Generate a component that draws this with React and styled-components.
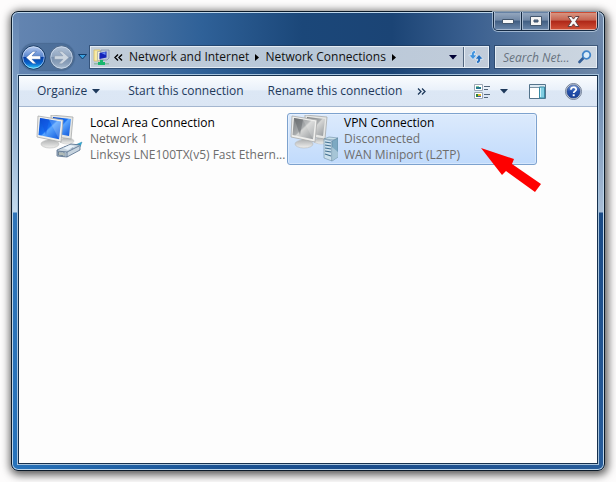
import React from "react";
import styled, { createGlobalStyle, css } from "styled-components";

const GlobalStyle = createGlobalStyle`
  * { box-sizing: border-box; }
  body {
    margin: 0;
    background: #fdfcfc;
    font-family: "Open Sans", "Noto Sans", sans-serif;
    font-size: 12px;
    line-height: 16px;
    color: #000;
  }
  button, input { font: inherit; color: inherit; margin: 0; }
  svg { display: block; flex: none; }
`;

const Desktop = styled.div`
  display: flex;
  min-height: 100vh;
  padding: 11px;
`;

const Window = styled.main`
  position: relative;
  flex: 1;
  min-width: 0;
  display: flex;
  flex-direction: column;
  padding: 0 6px 6px;
  border: 1px solid #0b1a29;
  border-radius: 7px;
  background:
    linear-gradient(#6485b1 0, #7f9fc4 80px, #c3daee 200px, #2f74b8 201px, #2672ba 100%) left / 7px 100% no-repeat,
    linear-gradient(#7389a8 0, #6483ab 60px, #a9bed6 200px, #1b4b86 201px, #285d9b 100%) right / 7px 100% no-repeat,
    linear-gradient(90deg, #6485b1 0, #5479a7 90px, #2f6198 190px, #1b4779 290px, #1b4475 380px, #3b6090 460px, #7089a8 100%) top / 100% 68px no-repeat,
    linear-gradient(90deg, #2672ba, #1b5292 35%, #1a4c8a 60%, #285d9b);
  box-shadow: inset 0 0 0 1px #bcd5ea, 1px 2px 8px 2px rgba(0, 0, 0, 0.65);
`;

const CaptionButtons = styled.div`
  display: flex;
  align-self: flex-end;
  height: 19px;
  border: 1px solid #142942;
  border-top: 0;
  border-radius: 0 0 5px 5px;
  overflow: hidden;
  box-shadow: 0 0 0 1px rgba(205, 221, 238, 0.65);
`;

const CaptionButton = styled.button`
  display: grid;
  place-items: center;
  width: ${(p) => (p.$close ? 47 : 27)}px;
  padding: 0;
  border: 1px solid ${(p) => (p.$close ? "#e5a89c" : "#a6b8cf")};
  border-top-color: transparent;
  background: ${(p) =>
    p.$close
      ? "linear-gradient(#d89582 0, #c66350 45%, #ae2617 50%, #cf4e35 100%)"
      : "linear-gradient(#93a6be 0, #7188a6 45%, #405d82 50%, #6884a7 100%)"};
  & + & { box-shadow: -1px 0 #142942; margin-left: 1px; }
`;

const NavBar = styled.nav`
  display: flex;
  align-items: center;
  height: 26px;
  margin-top: 13px;
  padding: 0 1px 0 3px;
`;

const TravelButtons = styled.div`
  display: flex;
  gap: 3px;
  height: 26px;
  align-items: center;
  border-radius: 13px;
  background: rgba(40, 72, 112, 0.3);
  box-shadow: 0 0 1px 1px rgba(34, 62, 98, 0.35);
`;

const IconButton = styled.button`
  display: grid;
  place-items: center;
  flex: none;
  width: ${(p) => p.$width || 25}px;
  height: ${(p) => p.$height || 25}px;
  padding: 0;
  border: 0;
  background: none;
`;

const fieldStyle = css`
  display: flex;
  align-items: center;
  height: 22px;
  border: 1px solid #e4ecf4;
  background: linear-gradient(#c3cedb, #b9c8d8);
  box-shadow: 0 0 0 1px rgba(28, 53, 86, 0.55);
`;

const AddressBar = styled.div`
  ${fieldStyle}
  flex: 1;
  min-width: 0;
  padding-left: 2px;
  background: linear-gradient(90deg, #c3ced9, #b7c7d8 50%, #c1ccda);
`;

const Crumb = styled.button`
  padding: 0;
  border: 0;
  background: none;
  white-space: nowrap;
  color: #111;
  margin-left: ${(p) => p.$gap || 6}px;
`;

const CrumbArrow = styled.svg`
  margin-left: 6px;
`;

const Spacer = styled.div`
  flex: 1;
`;

const RefreshButton = styled(IconButton)`
  height: 20px;
  border-left: 1px solid #52667f;
  box-shadow: inset 1px 0 #e4ecf4;
`;

const SearchBox = styled.label`
  ${fieldStyle}
  width: 102px;
  margin-left: 6px;
  padding: 0 4px 0 7px;
  background: linear-gradient(90deg, #c2ceda, #ccd6e1);
`;

const SearchInput = styled.input`
  flex: 1;
  min-width: 0;
  height: 20px;
  padding: 0;
  border: 0;
  outline: 0;
  background: none;
  &::placeholder { color: #68737f; opacity: 1; font-style: italic; }
`;

const Client = styled.section`
  flex: 1;
  display: flex;
  flex-direction: column;
  margin-top: 5px;
  border: 1px solid #16304d;
  background: #fdfdfd;
  box-shadow: 0 0 0 1px #a6c3dd;
`;

const Toolbar = styled.div`
  display: flex;
  align-items: center;
  height: 31px;
  padding: 0 15px 0 18px;
  border-bottom: 1px solid #a4b6cf;
  background: linear-gradient(#fafcfe 0, #eaf1fa 45%, #dce7f5 50%, #dbe6f4 100%);
  color: #1e395b;
`;

const ToolButton = styled.button`
  display: flex;
  align-items: center;
  gap: 5px;
  padding: 0;
  border: 0;
  background: none;
  white-space: nowrap;
  margin-right: ${(p) => p.$after || 0}px;
`;

const Connections = styled.div`
  display: flex;
  flex-wrap: wrap;
  align-items: flex-start;
  gap: 4px;
  padding: 6px 14px;
`;

const ConnectionTile = styled.article`
  position: relative;
  display: flex;
  width: 250px;
  height: 52px;
  padding: 1px 0 1px 2px;
  border: 1px solid ${(p) => (p.$selected ? "#7da2ce" : "transparent")};
  border-radius: 3px;
  background: ${(p) => (p.$selected ? "linear-gradient(#dceafc, #c1dbfc)" : "none")};
  box-shadow: ${(p) => (p.$selected ? "inset 0 0 0 1px rgba(255,255,255,.35)" : "none")};
`;

const TileText = styled.div`
  margin-left: 6px;
`;

const TileLine = styled.div`
  white-space: nowrap;
  color: ${(p) => (p.$title ? "#000" : "#6d6d6d")};
`;

const Pointer = styled.svg`
  position: absolute;
  left: 192px;
  top: 33px;
`;

const Caret = ({ color = "#1e395b" }) => (
  <svg width="8" height="5" viewBox="0 0 8 5"><path d="M0 0h8L4 4.6z" fill={color} /></svg>
);

const TravelIcon = ({ active, flip }) => {
  const id = active ? "back" : "forward";
  return (
    <svg width="25" height="25" viewBox="0 0 25 25">
      <defs>
        <linearGradient id={id} x2="0" y2="1">
          <stop stopColor={active ? "#b8ccef" : "#b3c3d7"} />
          <stop offset=".46" stopColor={active ? "#5b87d0" : "#91a6c1"} />
          <stop offset=".5" stopColor={active ? "#073fa4" : "#7890ae"} />
          <stop offset=".75" stopColor={active ? "#0965ce" : "#8ba0ba"} />
          <stop offset="1" stopColor={active ? "#35d8fb" : "#b1c2d4"} />
        </linearGradient>
      </defs>
      <circle cx="12.5" cy="12.5" r="11.7" fill={`url(#${id})`} stroke={active ? "#153760" : "#4e6786"} />
      <circle cx="12.5" cy="12.5" r="10.7" fill="none" stroke="#dfedff" strokeOpacity=".6" />
      <path
        transform={flip ? "translate(25 0) scale(-1 1)" : undefined}
        d="M5 12.5l7-6.2h3.300l-4.200 4.500h8.400v3.500h-8.400l4.200 4.500H12z"
        fill={active ? "#fff" : "#cdd6e0"}
        stroke={active ? "#2755a0" : "#8495ac"}
        strokeWidth=".5"
      />
    </svg>
  );
};

const NetworkFolderIcon = () => (
  <svg width="17" height="17" viewBox="0 0 17 17">
    <path d="M1 1h6v11H1z" fill="#f8eba6" stroke="#d5bd63" strokeWidth=".8" />
    <path d="M4.500 2.500h6v9h-6z" fill="#f0eedd" stroke="#a4a79f" strokeWidth=".7" />
    <path d="M8 1h8v8l-2 2H7V8z" fill="#bbc6d7" stroke="#7888a4" strokeWidth=".7" />
    <path d="M6.500 4l7-1.500v6l-7 1.500z" fill="#1322b9" />
    <path d="M8.500 4l4-1v3z" fill="#6589f6" />
    <path d="M1 14h15v1.500H1z" fill="#8fbba6" />
    <path d="M7 11h3v2h2v3H5v-3h2z" fill="#18b76f" />
  </svg>
);

const RefreshIcon = () => (
  <svg width="16" height="16" viewBox="0 0 16 16">
    <path d="M7.500 1.500C4.500 1.500 3.300 3.200 3.300 6H.7L5 10.500 9 6H6.300c0-1.600.2-2 1.200-2.300z" fill="#4094df" stroke="#f0f6fb" strokeWidth=".7" />
    <path d="M8.500 14.500c3 0 4.200-1.700 4.200-4.500h2.600L11 5.500 7 10h2.700c0 1.600-.2 2-1.200 2.300z" fill="#246fc0" stroke="#f0f6fb" strokeWidth=".7" />
  </svg>
);

const SearchIcon = () => (
  <svg width="14" height="14" viewBox="0 0 14 14">
    <path d="M5.800 7.500L1.500 12" stroke="#345f98" strokeWidth="2.600" strokeLinecap="round" />
    <circle cx="8.500" cy="5" r="3.800" fill="#dcecf8" stroke="#4285c9" strokeWidth="1.800" />
  </svg>
);

const ViewsIcon = () => (
  <svg width="17" height="17" viewBox="0 0 17 17">
    <path d="M.5 1.500h8v6h-8zM.5 9.500h8v6h-8z" fill="#fff" stroke="#9ba7b5" />
    <path d="M2 4h5v2H2z" fill="#257990" />
    <path d="M2 3h3v1H2z" fill="#84c99a" />
    <path d="M2 11h2v3H2z" fill="#29833a" />
    <path d="M4 11h3v2H4z" fill="#e1b72a" />
    <path d="M4 13h3v1H4z" fill="#4455c0" />
    <path d="M10 3.500h6M10 6.500h4M10 11.500h6M10 14.500h4" stroke="#52657b" />
  </svg>
);

const PaneIcon = () => (
  <svg width="17" height="15" viewBox="0 0 17 15">
    <path d="M.5.5h16v14H.5z" fill="#fff" stroke="#53738b" />
    <path d="M1 1h15v2H1z" fill="#dce9f2" />
    <path d="M1 3.500h9" stroke="#7a91a2" />
    <path d="M10.500 3h5v11h-5z" fill="#7fcde2" stroke="#388aa4" />
    <path d="M11.500 4v9" stroke="#ccf2fa" />
  </svg>
);

const HelpIcon = () => (
  <svg width="17" height="17" viewBox="0 0 17 17">
    <defs>
      <linearGradient id="help" x2="0" y2="1">
        <stop stopColor="#7b9edb" /><stop offset=".5" stopColor="#2350ab" /><stop offset="1" stopColor="#184099" />
      </linearGradient>
    </defs>
    <circle cx="8.500" cy="8.500" r="8" fill="#d1d8e3" stroke="#707f96" />
    <circle cx="8.500" cy="8.500" r="6.600" fill="url(#help)" stroke="#243f7c" strokeWidth=".6" />
    <path d="M5.900 6.700c0-3.300 5.300-3.200 5.300-.3 0 1.900-2.500 1.800-2.500 3.600" fill="none" stroke="#fff" strokeWidth="1.700" />
    <path d="M7.700 11.300h2v1.900h-2z" fill="#fff" />
  </svg>
);

const MonitorsIcon = ({ vpn }) => {
  const id = vpn ? "screen-gray" : "screen-blue";
  return (
    <svg width="48" height="48" viewBox="0 0 48 48">
      <defs>
        <linearGradient id={id} x1="0" y1="0" x2="1" y2="1">
          <stop stopColor={vpn ? "#777a7c" : "#0646c9"} />
          <stop offset=".45" stopColor={vpn ? "#a9acae" : "#1770f3"} />
          <stop offset=".5" stopColor={vpn ? "#d5d6d5" : "#5aa6ff"} />
          <stop offset="1" stopColor={vpn ? "#929699" : "#0b52d8"} />
        </linearGradient>
        <linearGradient id={id + "-base"} x2="0" y2="1">
          <stop stopColor="#b2b4b5" /><stop offset="1" stopColor="#f0f0ee" />
        </linearGradient>
      </defs>
      <path d="M27 23l5 1v4h-8z" fill="#c5c7c7" />
      <ellipse cx="31" cy="26" rx="7" ry="3" fill={`url(#${id}-base)`} stroke="#bfc1c1" strokeWidth=".5" />
      <path d="M15 0l22 2-2 22-20-3z" fill="#e5e6e4" stroke="#a7aaa9" strokeWidth=".8" />
      <path d="M17 2l18 2-2 17-16-3z" fill={`url(#${id})`} />
      <path d="M12 22l7 1v6h-8z" fill="#a7aaab" />
      <ellipse cx="14" cy="29" rx="9" ry="4" fill={`url(#${id}-base)`} stroke="#b7b9b9" strokeWidth=".6" />
      <path d="M2 1l25 4-2 22-24-5z" fill="#efefed" stroke="#a9abab" strokeWidth=".8" />
      <path d="M4 3l21 3.600-2 17.700L2.500 20z" fill={`url(#${id})`} />
      <path d="M4 3l9 1.500L10 20z" fill={vpn ? "#606467" : "#1052df"} opacity=".5" />
      <path d="M13 4.700l12 1.900-2 17.700z" fill="#fff" opacity=".18" />
      {vpn ? (
        <g strokeWidth=".6">
          <path d="M34 24l5-2 9 1-3 2z" fill="#c8dfe8" stroke="#718fa4" />
          <path d="M34 24l8 2v20l-8-3z" fill="#cce0ec" stroke="#6b8da6" />
          <path d="M42 26l6-3v19l-6 4z" fill="#7da9c2" stroke="#5b849e" />
          <path d="M35 27l6 1M35 30l6 1M35 33l6 1M35 36l6 1M35 39l6 2" stroke="#426f91" strokeWidth="1.100" />
          <path d="M42 32l6 5v5l-6 4z" fill="#bdd4e1" opacity=".65" />
        </g>
      ) : (
        <g strokeLinejoin="round">
          <path d="M37 31l9-4-2 5-6 3z" fill="#28b1d9" stroke="#3e87ac" strokeWidth=".5" />
          <path d="M21 35l14-6 9 1v5l-13 7-10-1z" fill="#c7d4df" stroke="#526b89" strokeWidth=".8" />
          <path d="M21 36l10 1 12-6M31 37v5M28 32l9 1" fill="none" stroke="#516a88" strokeWidth=".8" />
          <path d="M22 37l7 1v3l-7-1z" fill="#8b9899" stroke="#516a88" strokeWidth=".6" />
          <path d="M24 37v3M26 37v3M28 38v3" stroke="#edf3e9" strokeWidth=".8" />
          <path d="M27 33l7-3 5 1-7 4z" fill="#e8f2fa" />
        </g>
      )}
    </svg>
  );
};

const connections = [
  { name: "Local Area Connection", status: "Network 1", device: "Linksys LNE100TX(v5) Fast Ethern..." },
  { name: "VPN Connection", status: "Disconnected", device: "WAN Miniport (L2TP)", vpn: true },
];

export default function App() {
  return (
    <Desktop>
      <GlobalStyle />
      <Window>
        <CaptionButtons>
          <CaptionButton aria-label="Minimize">
            <svg width="12" height="6" viewBox="0 0 12 6"><path d="M.5 1.500h11v4H.5z" fill="#f7f7f7" stroke="#44576e" /></svg>
          </CaptionButton>
          <CaptionButton aria-label="Maximize">
            <svg width="12" height="10" viewBox="0 0 12 10"><path d="M.5.5h11v9H.5zM4 4v2h4V4z" fill="#f5f5f5" fillRule="evenodd" stroke="#44576e" /></svg>
          </CaptionButton>
          <CaptionButton aria-label="Close" $close>
            <svg width="13" height="11" viewBox="0 0 13 11"><path d="M1 .5h3.500l2 2.600 2-2.600H12L8.600 5.500 12 10.500H8.500l-2-2.600-2 2.600H1l3.400-5z" fill="#fafafa" stroke="#634041" /></svg>
          </CaptionButton>
        </CaptionButtons>
        <NavBar aria-label="Location">
          <TravelButtons>
            <IconButton aria-label="Back"><TravelIcon active /></IconButton>
            <IconButton aria-label="Forward"><TravelIcon flip /></IconButton>
          </TravelButtons>
          <IconButton aria-label="Recent pages" $width={16}>
            <svg width="9" height="6" viewBox="0 0 9 6"><path d="M.5.5h8l-4 4.500z" fill="#39a0e0" stroke="#143c69" /></svg>
          </IconButton>
          <AddressBar>
            <NetworkFolderIcon />
            <Crumb aria-label="Earlier locations" $gap={4}>
              <svg width="9" height="7" viewBox="0 0 9 7"><path d="M4 .5l-3 3 3 3M8 .5l-3 3 3 3" fill="none" stroke="#000" strokeWidth="1.400" /></svg>
            </Crumb>
            <Crumb>Network and Internet</Crumb>
            <CrumbArrow width="4" height="7" viewBox="0 0 4 7"><path d="M0 0v7l4-3.500z" /></CrumbArrow>
            <Crumb>Network Connections</Crumb>
            <CrumbArrow width="4" height="7" viewBox="0 0 4 7"><path d="M0 0v7l4-3.500z" /></CrumbArrow>
            <Spacer />
            <IconButton aria-label="Previous locations" $width={20} $height={20}><Caret color="#000035" /></IconButton>
            <RefreshButton aria-label="Refresh"><RefreshIcon /></RefreshButton>
          </AddressBar>
          <SearchBox>
            <SearchInput type="text" aria-label="Search Network Connections" placeholder="Search Net..." />
            <SearchIcon />
          </SearchBox>
        </NavBar>
        <Client>
          <Toolbar>
            <ToolButton $after={28}>Organize <Caret /></ToolButton>
            <ToolButton $after={24}>Start this connection</ToolButton>
            <ToolButton $after={15}>Rename this connection</ToolButton>
            <ToolButton aria-label="More commands">
              <svg width="9" height="7" viewBox="0 0 9 7"><path d="M1 .5l3 3-3 3M5 .5l3 3-3 3" fill="none" stroke="#1e395b" strokeWidth="1.300" /></svg>
            </ToolButton>
            <Spacer />
            <ToolButton aria-label="Change view" $after={9}><ViewsIcon /></ToolButton>
            <ToolButton aria-label="More views" $after={21}><Caret /></ToolButton>
            <ToolButton aria-label="Preview pane" $after={19}><PaneIcon /></ToolButton>
            <ToolButton aria-label="Help"><HelpIcon /></ToolButton>
          </Toolbar>
          <Connections>
            {connections.map((c) => (
              <ConnectionTile key={c.name} $selected={c.vpn}>
                <MonitorsIcon vpn={c.vpn} />
                <TileText>
                  <TileLine $title>{c.name}</TileLine>
                  <TileLine>{c.status}</TileLine>
                  <TileLine>{c.device}</TileLine>
                </TileText>
                {c.vpn && (
                  <Pointer width="62" height="46" viewBox="0 0 62 46" aria-hidden="true">
                    <path d="M1 1l33 11-2 5 29 20-6 8-29-21-4 4z" fill="#fe0000" />
                  </Pointer>
                )}
              </ConnectionTile>
            ))}
          </Connections>
        </Client>
      </Window>
    </Desktop>
  );
}
